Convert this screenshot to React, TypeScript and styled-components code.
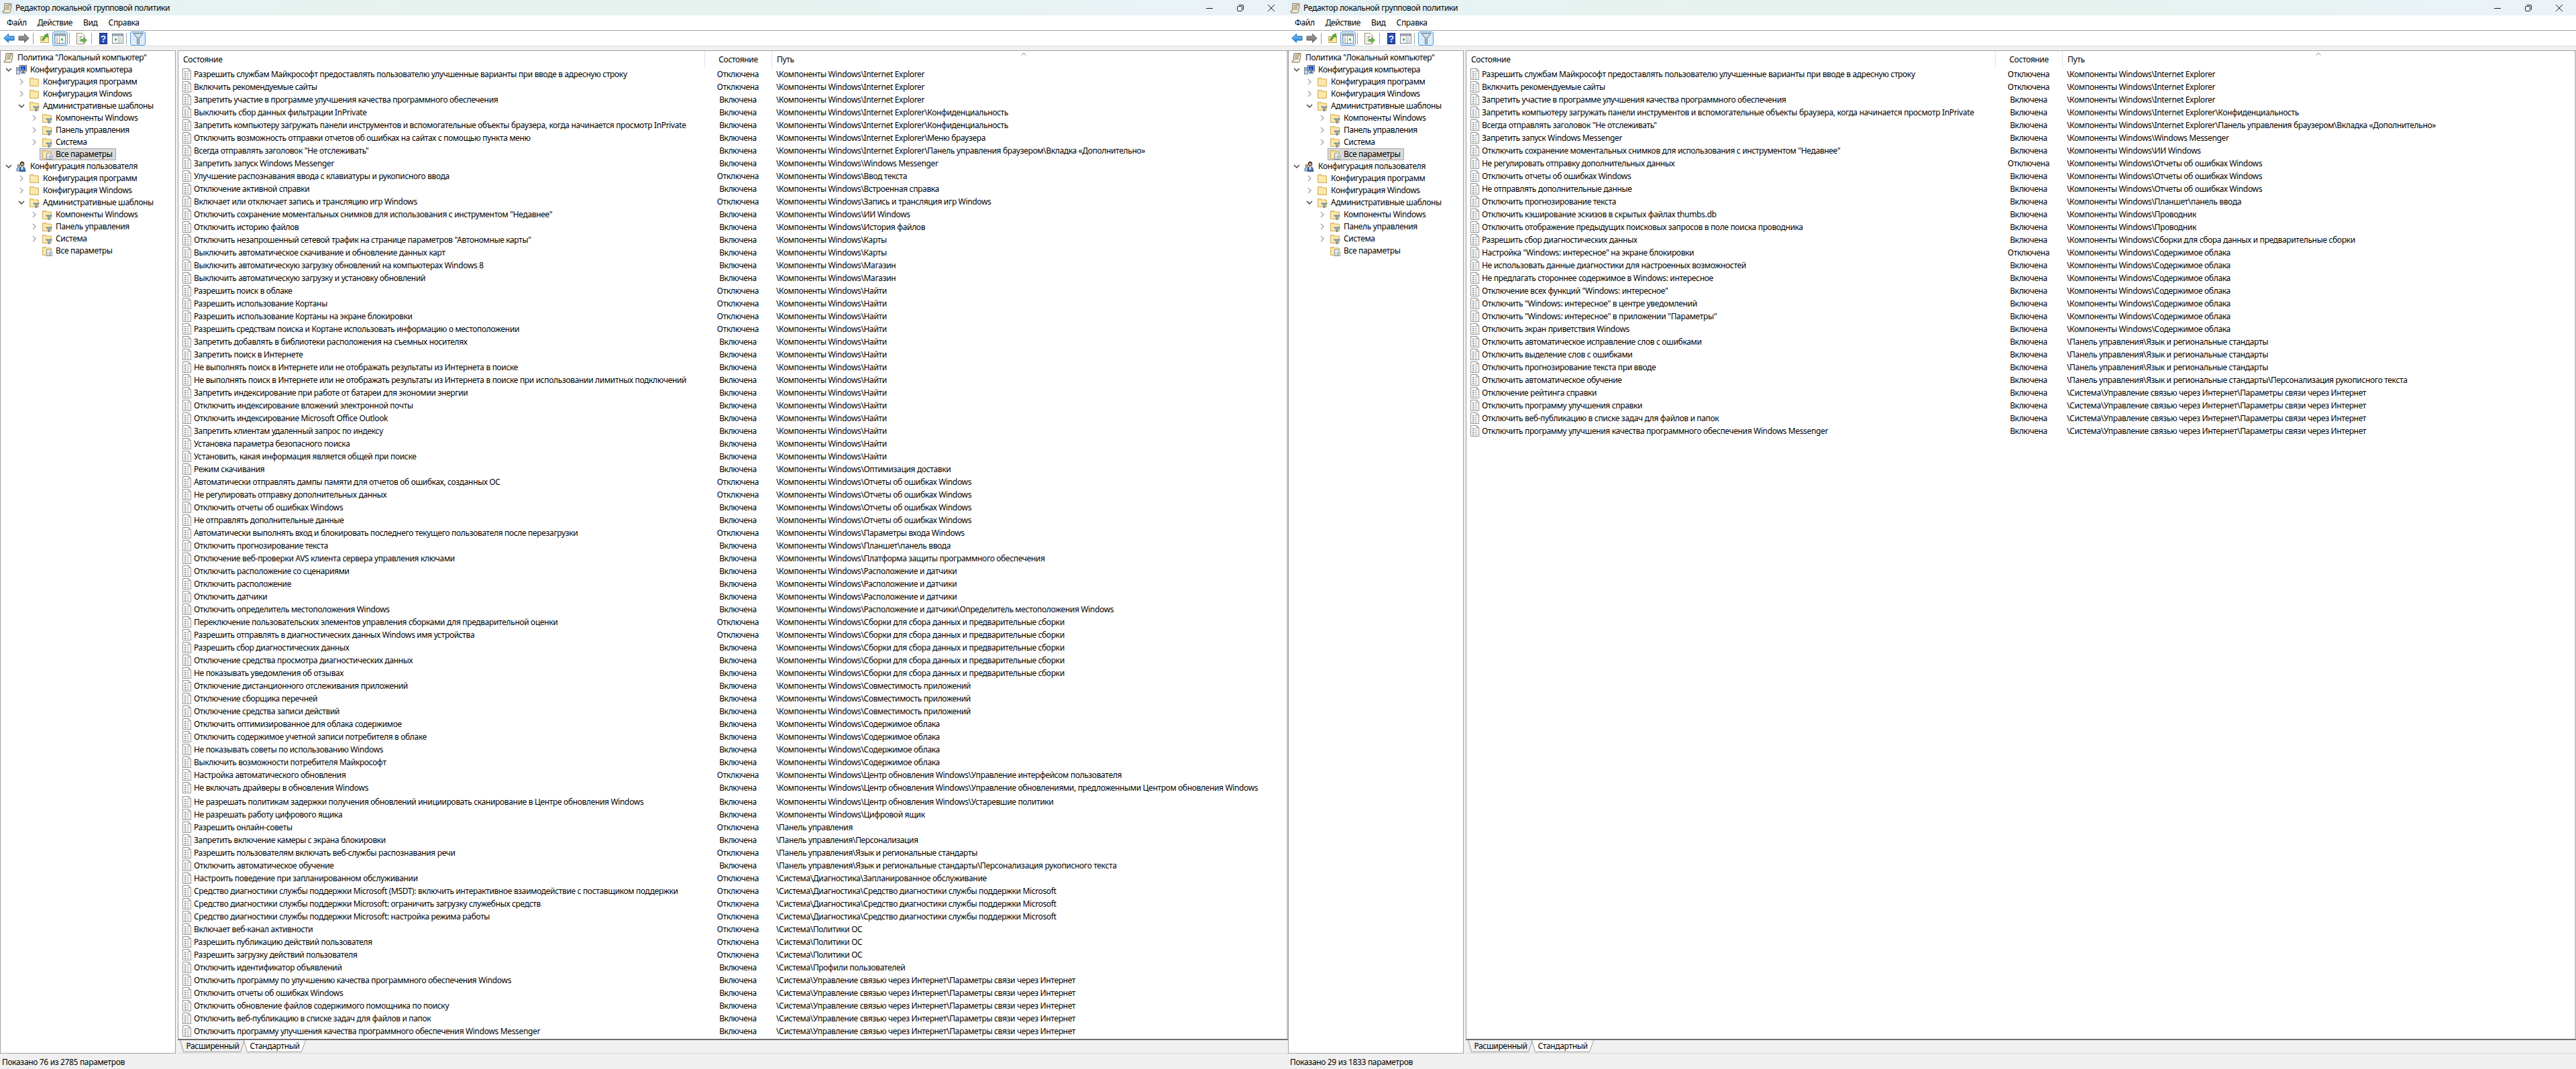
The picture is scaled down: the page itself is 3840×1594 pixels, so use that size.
import * as React from 'react'
import styled, { createGlobalStyle } from 'styled-components'

// Noto Sans runs about 5% wider than the Segoe UI of the original
const TEXT_SPACING = '-0.34px'

const GlobalStyle = createGlobalStyle`
    html, body {
        margin: 0;
        padding: 0;
        background: #f0f0f0;
    }
    body {
        font-family: 'Noto Sans', 'Open Sans', sans-serif;
        font-size: 12px;
        color: #000;
    }
`

const S = {
    Screen: styled.div`
        display: flex;
        width: 3840px;
        height: 1594px;
        overflow: hidden;
    `,
    Window: styled.div`
        display: flex;
        flex-direction: column;
        width: 1920px;
        height: 1594px;
        background: #f0f0f0;
    `,
    TitleBar: styled.div`
        display: flex;
        align-items: center;
        height: 23px;
        padding-left: 3px;
        background: linear-gradient(90deg, #e6f1f6 0%, #e8f3ef 30%, #e6f2ee 55%, #ebf3f8 100%);
    `,
    TitleText: styled.span`
        margin-left: 4px;
        flex: 1;
        letter-spacing: ${TEXT_SPACING};
        line-height: 23px;
    `,
    WindowControls: styled.div`
        display: flex;
        padding-right: 2px;
    `,
    WindowControl: styled.div`
        display: flex;
        align-items: center;
        justify-content: center;
        width: 46px;
        height: 21px;
    `,
    MenuBar: styled.div`
        display: flex;
        gap: 16px;
        height: 22px;
        padding-left: 10px;
        background: #fff;
        border-bottom: 1px solid #a9a9a9;
        line-height: 22px;
        letter-spacing: ${TEXT_SPACING};
    `,
    Toolbar: styled.div`
        display: flex;
        align-items: center;
        height: 22px;
        padding-left: 4px;
        background: #fff;
        border-bottom: 1px solid #dcdcdc;
    `,
    ToolButton: styled.div<{ $active?: boolean; $width?: number }>`
        display: flex;
        align-items: center;
        justify-content: center;
        box-sizing: border-box;
        width: ${(p) => p.$width ?? 23}px;
        height: 21px;
        border-radius: 3px;
        border: 1px solid ${(p) => (p.$active ? '#4f9fe0' : 'transparent')};
        background: ${(p) => (p.$active ? '#dcecfb' : 'transparent')};
    `,
    ToolSeparator: styled.div<{ $gap: number }>`
        width: 1px;
        height: 17px;
        margin: 0 ${(p) => p.$gap}px 0 2px;
        background: #a0a0a0;
    `,
    Workspace: styled.div`
        display: flex;
        gap: 3px;
        flex: 1;
        min-height: 0;
        padding-top: 6px;
    `,
    TreePanel: styled.div`
        box-sizing: border-box;
        width: 262px;
        padding-top: 1px;
        background: #fff;
        border: 1px solid #a0a0a0;
    `,
    TreeRow: styled.div<{ $level: number }>`
        display: flex;
        align-items: center;
        height: 18px;
        padding-left: ${(p) => (p.$level < 0 ? 4 : 5 + p.$level * 19)}px;
        white-space: nowrap;
    `,
    Twisty: styled.span`
        display: flex;
        justify-content: center;
        width: 14px;
        margin-right: 4px;
    `,
    TreeLabel: styled.span`
        margin-left: 3px;
        padding: 0 2px;
        line-height: 16px;
        letter-spacing: ${TEXT_SPACING};
    `,
    TreeItem: styled.span<{ $selected?: boolean }>`
        display: flex;
        align-items: center;
        box-sizing: border-box;
        height: 18px;
        margin-left: ${(p) => (p.$selected ? -3 : 0)}px;
        padding: 0 ${(p) => (p.$selected ? 2 : 0)}px;
        background: ${(p) => (p.$selected ? '#d9d9d9' : 'transparent')};
        border: ${(p) => (p.$selected ? '1px solid #a8a8a8' : 'none')};
    `,
    ListPanel: styled.div`
        display: flex;
        flex-direction: column;
        flex: 1;
        min-width: 0;
    `,
    ListFrame: styled.div`
        display: flex;
        flex-direction: column;
        flex: 1;
        min-height: 0;
        position: relative;
        background: #fff;
        border: 1px solid #a0a0a0;
        border-bottom: 2px solid #6d6d6d;
    `,
    ScrollEdge: styled.div`
        position: absolute;
        top: 0;
        right: 1px;
        bottom: 0;
        width: 1px;
        background: #dedede;
    `,
    HeaderRow: styled.div<{ $nameWidth: number }>`
        display: grid;
        grid-template-columns: ${(p) => p.$nameWidth}px 100px 1fr;
        height: 25px;
        position: relative;
    `,
    HeaderCell: styled.div<{ $centered?: boolean; $divided?: boolean }>`
        padding-left: ${(p) => (p.$centered ? 0 : 7)}px;
        line-height: 26px;
        letter-spacing: ${TEXT_SPACING};
        text-align: ${(p) => (p.$centered ? 'center' : 'left')};
        border-left: ${(p) => (p.$divided ? '1px solid #e5e5e5' : 'none')};
    `,
    SortCaret: styled.svg<{ $left: number }>`
        position: absolute;
        top: 2px;
        left: ${(p) => p.$left}px;
    `,
    Row: styled.div<{ $nameWidth: number; $tall?: boolean }>`
        display: grid;
        grid-template-columns: ${(p) => p.$nameWidth}px 100px 1fr;
        align-items: center;
        height: 19px;
        margin-top: ${(p) => (p.$tall ? 2 : 0)}px;
        white-space: nowrap;
        letter-spacing: ${TEXT_SPACING};
    `,
    NameCell: styled.div`
        display: flex;
        align-items: center;
        gap: 4px;
        padding-left: 6px;
        overflow: hidden;
    `,
    StatusCell: styled.div`
        text-align: center;
    `,
    PathCell: styled.div`
        padding-left: 7px;
        overflow: hidden;
    `,
    TabStrip: styled.div`
        display: flex;
        height: 19px;
        padding-left: 3px;
        border-bottom: 1px solid #d8d8d8;
        background: #f0f0f0;
    `,
    Tab: styled.div<{ $width: number }>`
        position: relative;
        width: ${(p) => p.$width}px;
        height: 18px;
        margin-right: -3px;
        text-align: center;
        line-height: 17px;
        letter-spacing: ${TEXT_SPACING};
    `,
    TabShape: styled.svg`
        position: absolute;
        top: 0;
        left: 0;
        z-index: 0;
    `,
    TabLabel: styled.span`
        position: relative;
        z-index: 1;
    `,
    StatusBar: styled.div`
        height: 23px;
        padding-left: 3px;
        line-height: 25px;
        letter-spacing: ${TEXT_SPACING};
    `,
}

// icons, drawn to the same pixel grid as the MMC bitmaps

const ScrollIcon = () => (
    <svg width="16" height="16" viewBox="0 0 16 16">
        <path d="M4 1.500h9.500c.8 0 1 .8.6 1.500L12.500 13.500c-.2 1-1 1.500-1.800 1.500H2c-1 0-1.500-.7-1.300-1.500.1-.6.8-1 1.300-1h1.200z" fill="#f3ecd2" stroke="#7d6f55" />
        <path d="M5.500 4h6M5.200 6h6M5 8h6M4.800 10h6" stroke="#8b8068" />
        <path d="M11 1.500c-.8.4-.7 2 .3 2h2" fill="none" stroke="#7d6f55" />
    </svg>
)

const ComputerIcon = () => (
    <svg width="16" height="16" viewBox="0 0 16 16">
        <rect x="0.500" y="4.500" width="5" height="10" fill="#c5d4e8" stroke="#6f85a0" />
        <path d="M1.500 6.500h3M1.500 8.500h3" stroke="#4f6a8c" />
        <rect x="5.500" y="1.500" width="10" height="8.500" fill="#b9c3cf" stroke="#55616f" />
        <rect x="7" y="3" width="7" height="5.500" fill="#1442c4" />
        <path d="M7.500 8l3.500-4.500v4.500z" fill="#4a8cf0" />
        <rect x="9" y="10" width="3" height="2" fill="#77818e" />
        <rect x="7" y="12" width="7" height="1.500" fill="#3f5f9a" />
    </svg>
)

const UserIcon = () => (
    <svg width="16" height="16" viewBox="0 0 16 16">
        <path d="M1 15v-4l2.500-2 3 2v4z" fill="#a9c4e4" stroke="#5b7da6" />
        <circle cx="3.800" cy="7" r="1.800" fill="#d2c2a8" stroke="#6c6250" />
        <path d="M5.500 15.500V10l3.500-1.500 3.500 1.500 1.500 5.500z" fill="#3f74b8" stroke="#24487c" />
        <path d="M8 8.500h2l.5 3-1.500 2-1.500-2z" fill="#f5f5f5" />
        <circle cx="9" cy="4.500" r="3" fill="#c99f7a" stroke="#3e3024" />
        <path d="M6 4.500c0-2.500 1.500-3.500 3-3.500s3 1 3 3.500c-1-1.200-2-1.500-3-1.500s-2 .3-3 1.500z" fill="#2a2622" />
    </svg>
)

const FolderBody = () => (
    <>
        <path d="M1.500 14.500v-12h5.500l1 1.500h6.500v10.500z" fill="#f6dc8e" stroke="#d1b066" />
        <path d="M2.500 13.500v-8.500h11v8.500z" fill="#fbe9ab" />
    </>
)

const FolderIcon = () => (
    <svg width="16" height="16" viewBox="0 0 16 16">
        <FolderBody />
    </svg>
)

const FilterFolderIcon = () => (
    <svg width="16" height="16" viewBox="0 0 16 16">
        <FolderBody />
        <path d="M6.500 9h9l-3.500 3.500v3.500h-2v-3.500z" fill="#93adbf" stroke="#4d6b7e" strokeWidth="0.700" />
    </svg>
)

const SettingsFolderIcon = () => (
    <svg width="16" height="16" viewBox="0 0 16 16">
        <FolderBody />
        <path d="M7.500 6.500h5l3 3v6h-8z" fill="#fff" stroke="#7f8a93" />
        <path d="M9 10h1M11 10h3M9 12h1M11 12h3M9 14h1M11 14h3" stroke="#6a7680" />
    </svg>
)

const PolicyItemIcon = () => (
    <svg width="13" height="17" viewBox="0 0 13 17" style={{ flexShrink: 0 }}>
        <path d="M0.500 0.500h9l3 3v13h-12z" fill="#fcfcfc" stroke="#8e8e8e" />
        <path d="M9.500 0.500v3h3" fill="#e8e8e8" stroke="#8e8e8e" />
        <path d="M3 5h2M3 8h2M3 11h2M3 14h2" stroke="#2e3a44" />
        <path d="M6 5h4M6 8h4M6 11h4M6 14h4" stroke="#9aa1a7" />
    </svg>
)

const Chevron = ({ open }: { open: boolean }) => (
    <svg width="10" height="10" viewBox="0 0 10 10">
        {open ? (
            <path d="M1 3l4 4 4-4" fill="none" stroke="#404040" strokeWidth="1.400" />
        ) : (
            <path d="M3 1l4 4-4 4" fill="none" stroke="#a6a6a6" strokeWidth="1.400" />
        )}
    </svg>
)

const ArrowIcon = ({ flip, from, to, edge }: { flip?: boolean; from: string; to: string; edge: string }) => {
    const id = `arrow-${from.slice(1)}`
    return (
        <svg width="17" height="16" viewBox="0 0 17 16" style={flip ? { transform: 'scaleX(-1)' } : undefined}>
            <defs>
                <linearGradient id={id} x1="0" y1="0" x2="0" y2="1">
                    <stop offset="0" stopColor={from} />
                    <stop offset="1" stopColor={to} />
                </linearGradient>
            </defs>
            <path d="M0.800 8L7.500 1.500v3.500h8.500v6H7.500v3.500z" fill={`url(#${id})`} stroke={edge} />
        </svg>
    )
}

const UpFolderIcon = () => (
    <svg width="16" height="16" viewBox="0 0 16 16">
        <path d="M1.500 14.500v-9h12v9z" fill="#f6dc8e" stroke="#c6a65d" />
        <path d="M2.500 13.500v-6h10v6z" fill="#fbe9ab" />
        <path d="M3.500 11c1-3 2.500-5 5-6l-1.500-1.500 5.500-2.500.5 6-1.500-1.500c-2.500 1-4.500 3-5.500 6z" fill="#52b23c" stroke="#2d7d24" strokeWidth="0.700" />
    </svg>
)

const PaneIcon = ({ left }: { left: boolean }) => (
    <svg width="17" height="15" viewBox="0 0 17 15">
        <rect x="0.500" y="0.500" width="16" height="14" fill="#f8f8f8" stroke="#7f8a93" />
        <rect x="1" y="1" width="15" height="3" fill="#a2aeb8" />
        <path d={left ? 'M2 6.500h4M2 8.500h4M2 10.500h4M2 12.500h4' : 'M11 6.500h4M11 8.500h4M11 10.500h4M11 12.500h4'} stroke="#6f7b85" strokeDasharray="1 1" />
        <path d={left ? 'M7.500 5v9' : 'M9.500 5v9'} stroke="#aab2b9" />
        <path d={left ? 'M12.500 6.500v5l-3-2.500z' : 'M4.500 6.500v5l3-2.500z'} fill="#1f9c3a" />
    </svg>
)

const ExportIcon = () => (
    <svg width="17" height="17" viewBox="0 0 17 17">
        <path d="M1.500 0.500h8l3 3v13h-11z" fill="#fbfaf2" stroke="#968d6f" />
        <path d="M4 6h1M4 9h1M4 12h1M6 6h4M6 9h2M6 12h2" stroke="#5b5b5b" />
        <path d="M8 9.500h4v-3l4.500 4.500-4.500 4.500v-3h-4z" fill="#67b947" stroke="#3c8a2a" strokeWidth="0.700" />
    </svg>
)

const HelpIcon = () => (
    <svg width="12" height="17" viewBox="0 0 12 17">
        <rect x="0.500" y="0.500" width="11" height="16" fill="#2a4ab0" stroke="#172f78" />
        <text x="6" y="13.500" textAnchor="middle" fontSize="14" fontWeight="bold" fontFamily="'Liberation Sans', sans-serif" fill="#dfe8fb">
            ?
        </text>
    </svg>
)

const FunnelIcon = () => (
    <svg width="16" height="17" viewBox="0 0 16 17">
        <path d="M0.500 0.500h15l-6 7.500v8.500h-3v-8.500z" fill="#a9bdcc" stroke="#6b8498" />
        <path d="M3 2h10l-4 4.500h-2z" fill="#dbe6ee" />
    </svg>
)

const MinimizeGlyph = () => (
    <svg width="10" height="10" viewBox="0 0 10 10">
        <path d="M0 5.500h10" stroke="#1a1a1a" />
    </svg>
)

const RestoreGlyph = () => (
    <svg width="10" height="10" viewBox="0 0 10 10">
        <rect x="0.500" y="2.500" width="7" height="7" rx="1" fill="none" stroke="#1a1a1a" />
        <path d="M2.500 0.500h5.500a1.500 1.500 0 0 1 1.500 1.500v5.500" fill="none" stroke="#1a1a1a" />
    </svg>
)

const CloseGlyph = () => (
    <svg width="10" height="10" viewBox="0 0 10 10">
        <path d="M0 0l10 10M10 0L0 10" stroke="#1a1a1a" />
    </svg>
)

// tree

type TreeKind = 'root' | 'computer' | 'user' | 'folder' | 'filter' | 'all'
type TreeNode = { level: number; kind: TreeKind; label: string; twisty?: 'open' | 'closed'; selected?: boolean }

const configBranch = (selected: boolean): TreeNode[] => [
    { level: 1, kind: 'folder', label: 'Конфигурация программ', twisty: 'closed' },
    { level: 1, kind: 'folder', label: 'Конфигурация Windows', twisty: 'closed' },
    { level: 1, kind: 'filter', label: 'Административные шаблоны', twisty: 'open' },
    { level: 2, kind: 'filter', label: 'Компоненты Windows', twisty: 'closed' },
    { level: 2, kind: 'filter', label: 'Панель управления', twisty: 'closed' },
    { level: 2, kind: 'filter', label: 'Система', twisty: 'closed' },
    { level: 2, kind: 'all', label: 'Все параметры', selected },
]

const treeNodes: TreeNode[] = [
    { level: -1, kind: 'root', label: 'Политика "Локальный компьютер"' },
    { level: 0, kind: 'computer', label: 'Конфигурация компьютера', twisty: 'open' },
    ...configBranch(true),
    { level: 0, kind: 'user', label: 'Конфигурация пользователя', twisty: 'open' },
    ...configBranch(false),
]

const treeIcons: Record<TreeKind, React.ReactNode> = {
    root: <ScrollIcon />,
    computer: <ComputerIcon />,
    user: <UserIcon />,
    folder: <FolderIcon />,
    filter: <FilterFolderIcon />,
    all: <SettingsFolderIcon />,
}

// policy rows

const ON = 'Включена'
const OFF = 'Отключена'
const W = '\\Компоненты Windows\\'
const IE = W + 'Internet Explorer'
const PRIVACY = IE + '\\Конфиденциальность'
const IE_TAB = IE + '\\Панель управления браузером\\Вкладка «Дополнительно»'
const SEARCH = W + 'Найти'
const ERRORS = W + 'Отчеты об ошибках Windows'
const LOCATION = W + 'Расположение и датчики'
const BUILDS = W + 'Сборки для сбора данных и предварительные сборки'
const COMPAT = W + 'Совместимость приложений'
const CLOUD = W + 'Содержимое облака'
const UPDATE = W + 'Центр обновления Windows\\'
const LANG = '\\Панель управления\\Язык и региональные стандарты'
const INK = LANG + '\\Персонализация рукописного текста'
const MSDT = '\\Система\\Диагностика\\Средство диагностики службы поддержки Microsoft'
const OS_POLICY = '\\Система\\Политики ОС'
const INET = '\\Система\\Управление связью через Интернет\\Параметры связи через Интернет'

type Policy = [string, string, string, boolean?]

const leftPolicies: Policy[] = [
    ['Разрешить службам Майкрософт предоставлять пользователю улучшенные варианты при вводе в адресную строку', OFF, IE],
    ['Включить рекомендуемые сайты', OFF, IE],
    ['Запретить участие в программе улучшения качества программного обеспечения', ON, IE],
    ['Выключить сбор данных фильтрации InPrivate', ON, PRIVACY],
    ['Запретить компьютеру загружать панели инструментов и вспомогательные объекты браузера, когда начинается просмотр InPrivate', ON, PRIVACY],
    ['Отключить возможность отправки отчетов об ошибках на сайтах с помощью пункта меню', ON, IE + '\\Меню браузера'],
    ['Всегда отправлять заголовок "Не отслеживать"', ON, IE_TAB],
    ['Запретить запуск Windows Messenger', ON, W + 'Windows Messenger'],
    ['Улучшение распознавания ввода с клавиатуры и рукописного ввода', OFF, W + 'Ввод текста'],
    ['Отключение активной справки', ON, W + 'Встроенная справка'],
    ['Включает или отключает запись и трансляцию игр Windows', OFF, W + 'Запись и трансляция игр Windows'],
    ['Отключить сохранение моментальных снимков для использования с инструментом "Недавнее"', ON, W + 'ИИ Windows'],
    ['Отключить историю файлов', ON, W + 'История файлов'],
    ['Отключить незапрошенный сетевой трафик на странице параметров "Автономные карты"', ON, W + 'Карты'],
    ['Выключить автоматическое скачивание и обновление данных карт', ON, W + 'Карты'],
    ['Выключить автоматическую загрузку обновлений на компьютерах Windows 8', ON, W + 'Магазин'],
    ['Выключить автоматическую загрузку и установку обновлений', ON, W + 'Магазин'],
    ['Разрешить поиск в облаке', OFF, SEARCH],
    ['Разрешить использование Кортаны', OFF, SEARCH],
    ['Разрешить использование Кортаны на экране блокировки', OFF, SEARCH],
    ['Разрешить средствам поиска и Кортане использовать информацию о местоположении', OFF, SEARCH],
    ['Запретить добавлять в библиотеки расположения на съемных носителях', ON, SEARCH],
    ['Запретить поиск в Интернете', ON, SEARCH],
    ['Не выполнять поиск в Интернете или не отображать результаты из Интернета в поиске', ON, SEARCH],
    ['Не выполнять поиск в Интернете или не отображать результаты из Интернета в поиске при использовании лимитных подключений', ON, SEARCH],
    ['Запретить индексирование при работе от батареи для экономии энергии', ON, SEARCH],
    ['Отключить индексирование вложений электронной почты', ON, SEARCH],
    ['Отключить индексирование Microsoft Office Outlook', ON, SEARCH],
    ['Запретить клиентам удаленный запрос по индексу', ON, SEARCH],
    ['Установка параметра безопасного поиска', ON, SEARCH],
    ['Установить, какая информация является общей при поиске', ON, SEARCH],
    ['Режим скачивания', ON, W + 'Оптимизация доставки'],
    ['Автоматически отправлять дампы памяти для отчетов об ошибках, созданных ОС', OFF, ERRORS],
    ['Не регулировать отправку дополнительных данных', OFF, ERRORS],
    ['Отключить отчеты об ошибках Windows', ON, ERRORS],
    ['Не отправлять дополнительные данные', ON, ERRORS],
    ['Автоматически выполнять вход и блокировать последнего текущего пользователя после перезагрузки', OFF, W + 'Параметры входа Windows'],
    ['Отключить прогнозирование текста', ON, W + 'Планшет\\панель ввода'],
    ['Отключение веб-проверки AVS клиента сервера управления ключами', ON, W + 'Платформа защиты программного обеспечения'],
    ['Отключить расположение со сценариями', ON, LOCATION],
    ['Отключить расположение', ON, LOCATION],
    ['Отключить датчики', ON, LOCATION],
    ['Отключить определитель местоположения Windows', ON, LOCATION + '\\Определитель местоположения Windows'],
    ['Переключение пользовательских элементов управления сборками для предварительной оценки', OFF, BUILDS],
    ['Разрешить отправлять в диагностических данных Windows имя устройства', OFF, BUILDS],
    ['Разрешить сбор диагностических данных', ON, BUILDS],
    ['Отключение средства просмотра диагностических данных', ON, BUILDS],
    ['Не показывать уведомления об отзывах', ON, BUILDS],
    ['Отключение дистанционного отслеживания приложений', ON, COMPAT],
    ['Отключение сборщика перечней', ON, COMPAT],
    ['Отключение средства записи действий', ON, COMPAT],
    ['Отключить оптимизированное для облака содержимое', ON, CLOUD],
    ['Отключить содержимое учетной записи потребителя в облаке', ON, CLOUD],
    ['Не показывать советы по использованию Windows', ON, CLOUD],
    ['Выключить возможности потребителя Майкрософт', ON, CLOUD],
    ['Настройка автоматического обновления', OFF, UPDATE + 'Управление интерфейсом пользователя'],
    ['Не включать драйверы в обновления Windows', ON, UPDATE + 'Управление обновлениями, предложенными Центром обновления Windows'],
    ['Не разрешать политикам задержки получения обновлений инициировать сканирование в Центре обновления Windows', ON, UPDATE + 'Устаревшие политики', true],
    ['Не разрешать работу цифрового ящика', ON, W + 'Цифровой ящик'],
    ['Разрешить онлайн-советы', OFF, '\\Панель управления'],
    ['Запретить включение камеры с экрана блокировки', ON, '\\Панель управления\\Персонализация'],
    ['Разрешить пользователям включать веб-службы распознавания речи', OFF, LANG],
    ['Отключить автоматическое обучение', ON, INK],
    ['Настроить поведение при запланированном обслуживании', OFF, '\\Система\\Диагностика\\Запланированное обслуживание'],
    ['Средство диагностики службы поддержки Microsoft (MSDT): включить интерактивное взаимодействие с поставщиком поддержки', OFF, MSDT],
    ['Средство диагностики службы поддержки Microsoft: ограничить загрузку служебных средств', OFF, MSDT],
    ['Средство диагностики службы поддержки Microsoft: настройка режима работы', OFF, MSDT],
    ['Включает веб-канал активности', OFF, OS_POLICY],
    ['Разрешить публикацию действий пользователя', OFF, OS_POLICY],
    ['Разрешить загрузку действий пользователя', OFF, OS_POLICY],
    ['Отключить идентификатор объявлений', ON, '\\Система\\Профили пользователей'],
    ['Отключить программу по улучшению качества программного обеспечения Windows', ON, INET],
    ['Отключить отчеты об ошибках Windows', ON, INET],
    ['Отключить обновление файлов содержимого помощника по поиску', ON, INET],
    ['Отключить веб-публикацию в списке задач для файлов и папок', ON, INET],
    ['Отключить программу улучшения качества программного обеспечения Windows Messenger', ON, INET],
]

const rightPolicies: Policy[] = [
    ['Разрешить службам Майкрософт предоставлять пользователю улучшенные варианты при вводе в адресную строку', OFF, IE],
    ['Включить рекомендуемые сайты', OFF, IE],
    ['Запретить участие в программе улучшения качества программного обеспечения', ON, IE],
    ['Запретить компьютеру загружать панели инструментов и вспомогательные объекты браузера, когда начинается просмотр InPrivate', ON, PRIVACY],
    ['Всегда отправлять заголовок "Не отслеживать"', ON, IE_TAB],
    ['Запретить запуск Windows Messenger', ON, W + 'Windows Messenger'],
    ['Отключить сохранение моментальных снимков для использования с инструментом "Недавнее"', ON, W + 'ИИ Windows'],
    ['Не регулировать отправку дополнительных данных', OFF, ERRORS],
    ['Отключить отчеты об ошибках Windows', ON, ERRORS],
    ['Не отправлять дополнительные данные', ON, ERRORS],
    ['Отключить прогнозирование текста', ON, W + 'Планшет\\панель ввода'],
    ['Отключить кэширование эскизов в скрытых файлах thumbs.db', ON, W + 'Проводник'],
    ['Отключить отображение предыдущих поисковых запросов в поле поиска проводника', ON, W + 'Проводник'],
    ['Разрешить сбор диагностических данных', ON, BUILDS],
    ['Настройка "Windows: интересное" на экране блокировки', OFF, CLOUD],
    ['Не использовать данные диагностики для настроенных возможностей', ON, CLOUD],
    ['Не предлагать стороннее содержимое в Windows: интересное', ON, CLOUD],
    ['Отключение всех функций "Windows: интересное"', ON, CLOUD],
    ['Отключить "Windows: интересное" в центре уведомлений', ON, CLOUD],
    ['Отключить "Windows: интересное" в приложении "Параметры"', ON, CLOUD],
    ['Отключить экран приветствия Windows', ON, CLOUD],
    ['Отключить автоматическое исправление слов с ошибками', ON, LANG],
    ['Отключить выделение слов с ошибками', ON, LANG],
    ['Отключить прогнозирование текста при вводе', ON, LANG],
    ['Отключить автоматическое обучение', ON, INK],
    ['Отключение рейтинга справки', ON, INET],
    ['Отключить программу улучшения справки', ON, INET],
    ['Отключить веб-публикацию в списке задач для файлов и папок', ON, INET],
    ['Отключить программу улучшения качества программного обеспечения Windows Messenger', ON, INET],
]

const PolicyList = ({ policies, nameWidth, caretLeft }: { policies: Policy[]; nameWidth: number; caretLeft: number }) => (
    <S.ListFrame>
        <S.ScrollEdge />
        <S.HeaderRow $nameWidth={nameWidth}>
            <S.HeaderCell>Состояние</S.HeaderCell>
            <S.HeaderCell $centered $divided>
                Состояние
            </S.HeaderCell>
            <S.HeaderCell $divided>Путь</S.HeaderCell>
            <S.SortCaret $left={caretLeft} width="8" height="5" viewBox="0 0 8 5">
                <path d="M0.500 4.500L4 1l3.500 3.500" fill="none" stroke="#8a8a8a" />
            </S.SortCaret>
        </S.HeaderRow>
        {policies.map(([name, status, path, tall], i) => (
            <S.Row key={i} $nameWidth={nameWidth} $tall={tall}>
                <S.NameCell>
                    <PolicyItemIcon />
                    <span>{name}</span>
                </S.NameCell>
                <S.StatusCell>{status}</S.StatusCell>
                <S.PathCell>{path}</S.PathCell>
            </S.Row>
        ))}
    </S.ListFrame>
)

const Tabs = () => (
    <S.TabStrip>
        <S.Tab $width={98}>
            <S.TabShape width="98" height="18" viewBox="0 0 98 18">
                <path d="M0.500 0L5.500 17.500H90.500L96 0" fill="#f0f0f0" stroke="#9a9a9a" />
            </S.TabShape>
            <S.TabLabel>Расширенный</S.TabLabel>
        </S.Tab>
        <S.Tab $width={93}>
            <S.TabShape width="93" height="18" viewBox="0 0 93 18">
                <path d="M0.500 0L5.500 17.500H86.500L92.500 0" fill="#fff" stroke="#9a9a9a" />
            </S.TabShape>
            <S.TabLabel>Стандартный</S.TabLabel>
        </S.Tab>
    </S.TabStrip>
)

const EditorWindow = ({
    policies,
    nameWidth,
    caretLeft,
    statusText,
}: {
    policies: Policy[]
    nameWidth: number
    caretLeft: number
    statusText: string
}) => (
    <S.Window>
        <S.TitleBar>
            <ScrollIcon />
            <S.TitleText>Редактор локальной групповой политики</S.TitleText>
            <S.WindowControls>
                <S.WindowControl>
                    <MinimizeGlyph />
                </S.WindowControl>
                <S.WindowControl>
                    <RestoreGlyph />
                </S.WindowControl>
                <S.WindowControl>
                    <CloseGlyph />
                </S.WindowControl>
            </S.WindowControls>
        </S.TitleBar>
        <S.MenuBar>
            <span>Файл</span>
            <span>Действие</span>
            <span>Вид</span>
            <span>Справка</span>
        </S.MenuBar>
        <S.Toolbar>
            <S.ToolButton $width={19}>
                <ArrowIcon from="#7fc6f7" to="#1e80d8" edge="#1e6fb8" />
            </S.ToolButton>
            <S.ToolButton $width={24}>
                <ArrowIcon flip from="#a8a8a8" to="#6b6b6b" edge="#626262" />
            </S.ToolButton>
            <S.ToolSeparator $gap={5} />
            <S.ToolButton>
                <UpFolderIcon />
            </S.ToolButton>
            <S.ToolButton $active>
                <PaneIcon left />
            </S.ToolButton>
            <S.ToolSeparator $gap={5} />
            <S.ToolButton $width={25}>
                <ExportIcon />
            </S.ToolButton>
            <S.ToolSeparator $gap={5} />
            <S.ToolButton>
                <HelpIcon />
            </S.ToolButton>
            <S.ToolButton $width={21}>
                <PaneIcon left={false} />
            </S.ToolButton>
            <S.ToolSeparator $gap={5} />
            <S.ToolButton $active>
                <FunnelIcon />
            </S.ToolButton>
        </S.Toolbar>
        <S.Workspace>
            <S.TreePanel>
                {treeNodes.map((node, i) => (
                    <S.TreeRow key={i} $level={node.level}>
                        {node.level >= 0 && (
                            <S.Twisty>{node.twisty && <Chevron open={node.twisty === 'open'} />}</S.Twisty>
                        )}
                        <S.TreeItem $selected={node.selected}>
                            {treeIcons[node.kind]}
                            <S.TreeLabel>{node.label}</S.TreeLabel>
                        </S.TreeItem>
                    </S.TreeRow>
                ))}
            </S.TreePanel>
            <S.ListPanel>
                <PolicyList policies={policies} nameWidth={nameWidth} caretLeft={caretLeft} />
                <Tabs />
            </S.ListPanel>
        </S.Workspace>
        <S.StatusBar>{statusText}</S.StatusBar>
    </S.Window>
)

export default function App() {
    return (
        <>
            <GlobalStyle />
            <S.Screen>
                <EditorWindow policies={leftPolicies} nameWidth={784} caretLeft={1256} statusText="Показано 76 из 2785 параметров" />
                <EditorWindow policies={rightPolicies} nameWidth={788} caretLeft={1266} statusText="Показано 29 из 1833 параметров" />
            </S.Screen>
        </>
    )
}
